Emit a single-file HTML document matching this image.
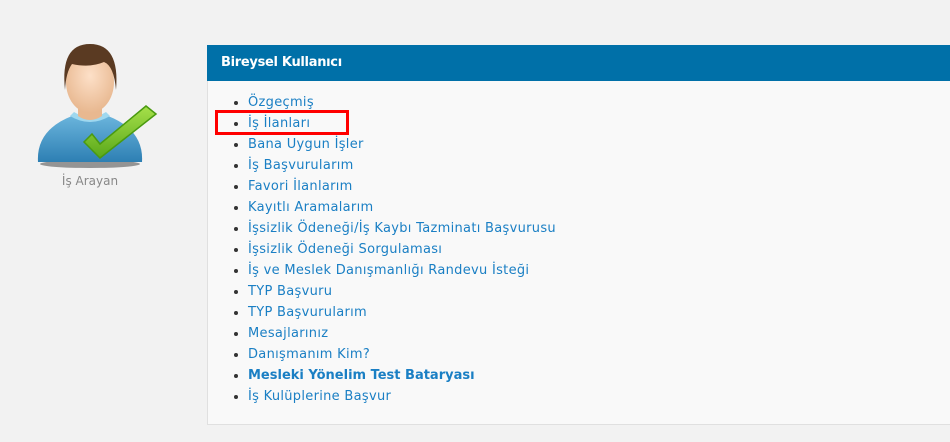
<!DOCTYPE html>
<html><head><meta charset="utf-8"><style>
body{margin:0;width:950px;height:442px;background:#f2f2f2;font-family:"DejaVu Sans","Liberation Sans",sans-serif;overflow:hidden;position:relative}
.panel{position:absolute;left:207px;top:45px;width:760px;height:380px;background:#f9f9f9;border:1px solid #e0e0e0;box-sizing:border-box}
.hd{height:36px;background:#0070a8;color:#fff;font-size:13px;line-height:36px;padding-left:14px;margin:-1px -1px 0 -1px;font-weight:bold;letter-spacing:-0.3px}
ul{margin:0;padding:0;position:absolute;left:26px;top:46px;list-style:none}
li{font-size:13px;line-height:21px;color:#1a7fc4;height:21px;position:relative;padding-left:14px;letter-spacing:0.3px}
li:before{content:"";position:absolute;left:0;top:9px;width:4px;height:4px;border-radius:50%;background:#333}
b{font-weight:bold;letter-spacing:0}
.red{position:absolute;left:215px;top:110px;width:134px;height:25px;border:3px solid #f00;box-sizing:border-box}
.lbl{position:absolute;left:0;width:180px;top:174px;text-align:center;font-size:12px;color:#888}
</style></head><body>
<svg width="180" height="180" style="position:absolute;left:0;top:30px" viewBox="0 0 180 180">
<defs><radialGradient id="f" cx="50%" cy="40%" r="60%"><stop offset="0" stop-color="#fde0c8"/><stop offset="1" stop-color="#e8b890"/></radialGradient>
<linearGradient id="s" x1="0" y1="0" x2="0" y2="1"><stop offset="0" stop-color="#6ab4dc"/><stop offset="1" stop-color="#2d7fb3"/></linearGradient>
<linearGradient id="g" x1="0" y1="0" x2="0" y2="1"><stop offset="0" stop-color="#a6e04a"/><stop offset="1" stop-color="#5aa81a"/></linearGradient></defs>
<ellipse cx="90" cy="134" rx="50" ry="4" fill="#555" opacity=".6"/>
<path d="M38 132 Q36 100 72 86 L108 86 Q144 100 142 132 Z" fill="url(#s)"/>
<path d="M70 86 Q90 98 110 86 L106 82 Q90 92 74 82Z" fill="#9fd8ef"/>
<path d="M78 66 L78 86 Q90 94 102 86 L102 66Z" fill="#e8b890"/>
<ellipse cx="90" cy="52" rx="24" ry="31" fill="url(#f)"/>
<path d="M65 60 Q60 14 90 14 Q120 14 116 60 Q114 36 104 32 Q90 38 72 34 Q66 42 65 60Z" fill="#5a3a22"/>
<path d="M84 112 L100 128 L156 84 L146 76 L100 114 L92 104Z" fill="url(#g)" stroke="#4a9a10" stroke-width="1.5"/>
</svg>
<div class="lbl">İş Arayan</div>
<div class="panel"><div class="hd">Bireysel Kullanıcı</div>
<ul>
<li>Özgeçmiş</li><li>İş İlanları</li><li>Bana Uygun İşler</li><li>İş Başvurularım</li><li>Favori İlanlarım</li><li>Kayıtlı Aramalarım</li><li>İşsizlik Ödeneği/İş Kaybı Tazminatı Başvurusu</li><li>İşsizlik Ödeneği Sorgulaması</li><li>İş ve Meslek Danışmanlığı Randevu İsteği</li><li>TYP Başvuru</li><li>TYP Başvurularım</li><li>Mesajlarınız</li><li>Danışmanım Kim?</li><li><b>Mesleki Yönelim Test Bataryası</b></li><li>İş Kulüplerine Başvur</li>
</ul></div>
<div class="red"></div>
</body></html>
